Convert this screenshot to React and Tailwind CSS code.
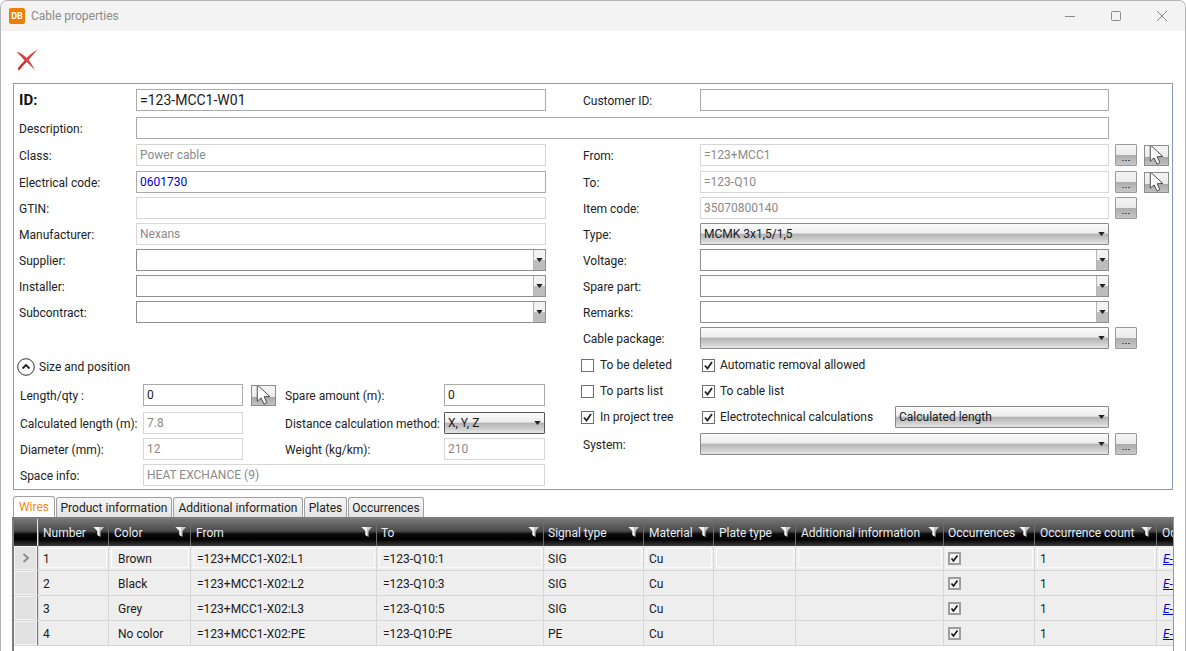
import React from "react";

function Cursor({ className = "" }) {
  return (
    <svg viewBox="0 0 24 24" className={className}>
      <path d="M5.5 1.5 L5.5 18.5 L9.5 15 L12.5 21.5 L15.5 20 L12.7 13.8 L18.5 13.5 Z" fill="#fff" stroke="#444" strokeWidth="1" strokeLinejoin="miter" />
    </svg>
  );
}

function Arrow() {
  return (
    <svg viewBox="0 0 8 5" className="w-[7px] h-[4px] shrink-0">
      <path d="M0 0 H8 L4 5 Z" fill="#222" />
    </svg>
  );
}

function Field({ value = "", kind = "active", w = "w-[409px]", text = "" }) {
  const base = kind === "disabled"
    ? "border-[#d6d6d6] text-[#8a8a8a]"
    : "border-[#ababab] text-[#1a1a1a]";
  return (
    <div className={`h-[22px] ${w} border ${base} ${text} bg-white flex items-center pl-[3px] leading-none whitespace-nowrap overflow-hidden shrink-0`}>
      <span className={kind === "disabled" ? "-mt-[1px]" : ""}>{value}</span>
    </div>
  );
}

function WhiteCombo({ w = "w-[409px]" }) {
  return (
    <div className={`h-[22px] ${w} border border-[#8f8f8f] bg-white flex justify-end shrink-0`}>
      <div className="w-[12px] border-l border-[#b5b5b5] bg-gradient-to-b from-[#f2f2f2] from-50% to-[#bdbdbd] to-50% flex items-center justify-center">
        <Arrow />
      </div>
    </div>
  );
}

function GradCombo({ value = "", w = "w-[409px]", dark = false }) {
  return (
    <div className={`h-[22px] ${w} border ${dark ? "border-[#555]" : "border-[#8a8a8a]"} rounded-[1px] bg-[linear-gradient(to_bottom,#fbfbfb_0%,#ececec_45%,#b4b4b4_52%,#d4d4d4_85%,#e6e6e6_100%)] flex items-center pl-[3px] pr-[3px] justify-between shrink-0 text-[#1a1a1a]`}>
      <span className="whitespace-nowrap">{value}</span>
      <Arrow />
    </div>
  );
}

function Dots() {
  return (
    <div className="w-[22px] h-[22px] ml-[6px] border border-[#9a9a9a] rounded-[1px] bg-[linear-gradient(to_bottom,#f4f4f4_0%,#ebebeb_48%,#adadad_52%,#c8c8c8_100%)] flex items-end justify-center pb-[4px] gap-[1px] shrink-0">
      <span className="w-[2px] h-[1px] bg-[#7a5a50]" />
      <span className="w-[2px] h-[1px] bg-[#3a5a90]" />
      <span className="w-[2px] h-[1px] bg-[#555]" />
    </div>
  );
}

function Pick({ className = "ml-[7px]" }) {
  return (
    <div className={`w-[25px] h-[21px] ${className} border border-[#8c8c8c] bg-[linear-gradient(to_bottom,#f4f4f4_0%,#ececec_55%,#a8a8a8_60%,#c2c2c2_100%)] flex items-center justify-center overflow-hidden shrink-0`}>
      <Cursor className="w-[24px] h-[24px]" />
    </div>
  );
}

function Row({ label, mt = "", children }) {
  return (
    <div className={`flex items-center h-[22px] ${mt}`}>
      <div className="w-[117px] shrink-0 text-[#222] whitespace-nowrap pt-[1px]">{label}</div>
      {children}
    </div>
  );
}

function LowLabel({ w, children, className = "" }) {
  return <div className={`${w} shrink-0 text-[#222] whitespace-nowrap pt-[1px] ${className}`}>{children}</div>;
}

function Check({ on = false }) {
  return (
    <span className="w-[13px] h-[13px] border border-[#6f6f6f] bg-white flex items-center justify-center shrink-0">
      {on && (
        <svg viewBox="0 0 11 11" className="w-[11px] h-[11px]">
          <path d="M2 5.5 L4.5 8.5 L9 2" fill="none" stroke="#222" strokeWidth="1.8" />
        </svg>
      )}
    </span>
  );
}

function CheckLabel({ on, label, w = "", gap = "gap-[5px]" }) {
  return (
    <div className={`flex items-center ${gap} ${w} shrink-0`}>
      <Check on={on} />
      <span className="text-[#222] whitespace-nowrap">{label}</span>
    </div>
  );
}

function Filter() {
  return (
    <svg viewBox="0 0 12 12" className="w-[12px] h-[12px] shrink-0 ml-auto mr-[3px] -mt-[3px]">
      <path d="M0.5 1 H11 L7.5 5 V11 L4.5 9 V5 Z" fill="#c9c9c9" />
      <path d="M4.5 5 L0.5 1 H6 V10 L4.5 9 Z" fill="#f4f4f4" />
    </svg>
  );
}

const cols = [
  ["Number", "w-[70px]", "pl-[4px]", "pl-[4px]"],
  ["Color", "w-[82px]", "pl-[5px]", "pl-[9px]"],
  ["From", "w-[186px]", "pl-[5px]", "pl-[6px]"],
  ["To", "w-[167px]", "pl-[4px]", "pl-[6px]"],
  ["Signal type", "w-[100px]", "pl-[4px]", "pl-[4px]"],
  ["Material", "w-[70px]", "pl-[5px]", "pl-[5px]"],
  ["Plate type", "w-[82px]", "pl-[5px]", "pl-[5px]"],
  ["Additional information", "w-[148px]", "pl-[5px]", "pl-[5px]"],
  ["Occurrences", "w-[91px]", "pl-[4px]", "pl-[4px]"],
  ["Occurrence count", "w-[122px]", "pl-[5px]", "pl-[5px]"],
  ["Oc", "w-[40px]", "pl-[5px]", "pl-[6px]"],
];

const rows = [
  ["1", "Brown", "=123+MCC1-X02:L1", "=123-Q10:1", "SIG", "Cu"],
  ["2", "Black", "=123+MCC1-X02:L2", "=123-Q10:3", "SIG", "Cu"],
  ["3", "Grey", "=123+MCC1-X02:L3", "=123-Q10:5", "SIG", "Cu"],
  ["4", "No color", "=123+MCC1-X02:PE", "=123-Q10:PE", "PE", "Cu"],
];

function Cell({ col, sel, children }) {
  return (
    <div className={`${col[1]} ${col[3]} h-full pt-[2px] shrink-0 border-r border-[#d6d6d6] flex items-center whitespace-nowrap overflow-hidden text-[#1a1a1a] ${sel ? "[outline:1px_solid_#fbfbfb] [outline-offset:-3px]" : ""}`}>
      {children}
    </div>
  );
}

function GridCheck() {
  return (
    <span className="w-[13px] h-[13px] -mt-[2px] border-2 border-[#9d9d9d] bg-[#f4f4f4] flex items-center justify-center">
      <svg viewBox="0 0 9 9" className="w-[9px] h-[9px]">
        <path d="M1.5 4.5 L3.5 7 L7.5 1.5" fill="none" stroke="#111" strokeWidth="1.6" />
      </svg>
    </span>
  );
}

const tabs = [
  ["Wires", "w-[42px]", true],
  ["Product information", "w-[116px]"],
  ["Additional information", "w-[130px]"],
  ["Plates", "w-[43px]"],
  ["Occurrences", "w-[76px]"],
];

export default function App() {
  return (
    <div className="w-[1186px] h-[651px] overflow-hidden bg-white text-[12px] leading-[16px] font-['Roboto',sans-serif] flex flex-col border-x border-t border-[#b4b4b4] rounded-t-[7px]">
      <div className="h-[30px] bg-[#f3f3f3] flex items-center shrink-0">
        <div className="ml-[8px] w-[16px] h-[16px] rounded-[2px] bg-[#ef7d00] text-white text-[9px] font-bold flex items-center justify-center leading-none">DB</div>
        <div className="ml-[6px] text-[#8b8b8b]">Cable properties</div>
        <div className="ml-auto flex items-center">
          <svg viewBox="0 0 46 30" className="w-[46px] h-[30px]"><path d="M18 15.5 H28" stroke="#8a8a8a" strokeWidth="1" /></svg>
          <svg viewBox="0 0 46 30" className="w-[46px] h-[30px]"><rect x="18.5" y="10.5" width="9" height="9" rx="1" fill="none" stroke="#8a8a8a" /></svg>
          <svg viewBox="0 0 46 30" className="w-[46px] h-[30px]"><path d="M18 10 L28 20 M28 10 L18 20" stroke="#8a8a8a" strokeWidth="1" /></svg>
        </div>
      </div>

      <div className="h-[52px] shrink-0 flex items-start pl-[15px] pt-[18px]">
        <svg viewBox="0 0 22 22" className="w-[22px] h-[22px]">
          <path d="M0.5 3 C5 3.500 8 6.500 10.500 9 C14 5.500 17 3 21.500 0.500 C18 4.500 15 8 12.500 11 C15 14 17 17.500 19 21 C16 18.500 13.500 15.500 10.800 13 C8 15.500 6 18.500 3 21.500 C2 21.500 1.500 20 2 19 C3.500 16.500 6 14 8.500 11.500 C6 8.500 3.500 5.500 0.500 3 Z" fill="#d9423f" />
          <path d="M2.500 20.500 C5 17 7.500 14.500 10 12" fill="none" stroke="#b02a28" strokeWidth="1" />
        </svg>
      </div>

      <div className="ml-[12px] w-[1160px] h-[407px] shrink-0 border border-[#7f9db9] pl-[5px] pt-[5px] flex flex-col">
        <div className="flex">
          <div className="w-[527px] flex items-center h-[22px] shrink-0">
            <div className="w-[117px] text-[15px] font-bold text-[#111]">ID:</div>
            <Field value="=123-MCC1-W01" w="w-[410px]" text="text-[14px]" />
          </div>
          <div className="ml-[37px]">
            <Row label="Customer ID:"><Field /></Row>
          </div>
        </div>
        <div className="mt-[6px]">
          <Row label="Description:"><Field w="w-[973px]" /></Row>
        </div>

        <div className="flex mt-[5px]">
          <div className="w-[527px] shrink-0 flex flex-col">
            <Row label="Class:"><Field kind="disabled" value="Power cable" w="w-[410px]" /></Row>
            <Row label="Electrical code:" mt="mt-[5px]"><Field value={<span className="text-[#0000e0]">0601730</span>} w="w-[410px]" /></Row>
            <Row label="GTIN:" mt="mt-[4px]"><Field kind="disabled" w="w-[410px]" /></Row>
            <Row label="Manufacturer:" mt="mt-[4px]"><Field kind="disabled" value="Nexans" w="w-[410px]" /></Row>
            <Row label="Supplier:" mt="mt-[4px]"><WhiteCombo w="w-[410px]" /></Row>
            <Row label="Installer:" mt="mt-[4px]"><WhiteCombo w="w-[410px]" /></Row>
            <Row label="Subcontract:" mt="mt-[4px]"><WhiteCombo w="w-[410px]" /></Row>

            <div className="mt-[34px] h-[20px] flex items-center -ml-[2px]">
              <svg viewBox="0 0 18 18" className="w-[18px] h-[18px] shrink-0">
                <circle cx="9" cy="9" r="8.300" fill="#fff" stroke="#333" strokeWidth="1" />
                <path d="M5.500 10.500 L9 7 L12.500 10.500" fill="none" stroke="#222" strokeWidth="1.800" />
              </svg>
              <span className="ml-[4px] text-[#222]">Size and position</span>
            </div>

            <div className="flex items-center h-[22px] mt-[7px] ml-[1px]">
              <LowLabel w="w-[123px]">Length/qty :</LowLabel>
              <Field value="0" w="w-[100px]" />
              <Pick className="ml-[8px]" />
              <LowLabel w="w-[159px]" className="ml-[9px]">Spare amount (m):</LowLabel>
              <Field value="0" w="w-[101px]" />
            </div>
            <div className="flex items-center h-[22px] mt-[6px] ml-[1px]">
              <LowLabel w="w-[123px]">Calculated length (m):</LowLabel>
              <Field kind="disabled" value="7.8" w="w-[100px]" />
              <LowLabel w="w-[159px]" className="ml-[42px]">Distance calculation method:</LowLabel>
              <GradCombo value="X, Y, Z" w="w-[101px]" dark />
            </div>
            <div className="flex items-center h-[22px] mt-[4px] ml-[1px]">
              <LowLabel w="w-[123px]">Diameter (mm):</LowLabel>
              <Field kind="disabled" value="12" w="w-[100px]" />
              <LowLabel w="w-[159px]" className="ml-[42px]">Weight (kg/km):</LowLabel>
              <Field kind="disabled" value="210" w="w-[101px]" />
            </div>
            <div className="flex items-center h-[22px] mt-[4px] ml-[1px]">
              <LowLabel w="w-[123px]">Space info:</LowLabel>
              <Field kind="disabled" value="HEAT EXCHANCE (9)" w="w-[402px]" />
            </div>
          </div>

          <div className="ml-[37px] flex flex-col">
            <Row label="From:"><Field kind="disabled" value="=123+MCC1" /><Dots /><Pick /></Row>
            <Row label="To:" mt="mt-[5px]"><Field kind="disabled" value="=123-Q10" /><Dots /><Pick /></Row>
            <Row label="Item code:" mt="mt-[4px]"><Field kind="disabled" value="35070800140" /><Dots /></Row>
            <Row label="Type:" mt="mt-[4px]"><GradCombo value="MCMK 3x1,5/1,5" /></Row>
            <Row label="Voltage:" mt="mt-[4px]"><WhiteCombo /></Row>
            <Row label="Spare part:" mt="mt-[4px]"><WhiteCombo /></Row>
            <Row label="Remarks:" mt="mt-[4px]"><WhiteCombo /></Row>
            <Row label="Cable package:" mt="mt-[4px]"><GradCombo /><Dots /></Row>

            <div className="flex items-center h-[22px] mt-[5px] -ml-[2px]">
              <CheckLabel label="To be deleted" w="w-[121px]" gap="gap-[6px]" />
              <CheckLabel on label="Automatic removal allowed" />
            </div>
            <div className="flex items-center h-[22px] mt-[4px] -ml-[2px]">
              <CheckLabel label="To parts list" w="w-[121px]" gap="gap-[6px]" />
              <CheckLabel on label="To cable list" />
            </div>
            <div className="flex items-center h-[22px] mt-[4px] -ml-[2px]">
              <CheckLabel on label="In project tree" w="w-[121px]" gap="gap-[6px]" />
              <CheckLabel on label="Electrotechnical calculations" w="w-[193px]" />
              <GradCombo value="Calculated length" w="w-[214px]" />
            </div>
            <Row label="System:" mt="mt-[5px]"><GradCombo /><Dots /></Row>
          </div>
        </div>
      </div>

      <div className="ml-[12px] mt-[6px] h-[21px] flex items-end gap-[1px] shrink-0">
        {tabs.map(([t, w, active]) => (
          <div
            key={t}
            className={`${w} ${active ? "h-[21px] bg-white text-[#f08a1d]" : "h-[20px] bg-gradient-to-b from-[#f6f6f6] to-[#e4e4e4] text-[#222]"} border border-b-0 border-[#a0a0a0] rounded-t-[3px] flex items-center justify-center whitespace-nowrap shrink-0`}
          >
            {t}
          </div>
        ))}
      </div>

      <div className="ml-[11px] w-[1162px] flex-1 border-l-2 border-t-2 border-r border-t-[#7c7c7c] border-l-[#7c7c7c] border-r-[#7f9db9] overflow-hidden">
        <div className="flex h-[27px] bg-[linear-gradient(to_bottom,#767676_0%,#4a4a4a_45%,#0c0c0c_55%,#000_75%,#3c3c3c_100%)] text-[#e6eef6] w-max">
          <div className="w-[23px] shrink-0" />
          <div className="w-[1px] bg-[#e8e8e8] shrink-0" />
          <div className="w-[1px] bg-[#666] shrink-0" />
          {cols.map((c) => (
            <div key={c[0]} className={`${c[1]} ${c[2]} shrink-0 pt-[1px] border-r border-[#6c6c6c] flex items-center whitespace-nowrap`}>
              <span>{c[0]}</span>
              {c[0] !== "Oc" && <Filter />}
            </div>
          ))}
        </div>
        {rows.map((r, i) => (
          <div key={r[0]} className="flex h-[25px] bg-[#eeeeee] border-b border-[#d6d6d6] w-max">
            <div className="w-[23px] shrink-0 bg-[#e2e2e2] border border-[#f6f6f6] flex items-center justify-center">
              {i === 0 && (
                <svg viewBox="0 0 8 10" className="w-[8px] h-[10px]">
                  <path d="M1.500 1 L6 5 L1.500 9" fill="none" stroke="#8a8a8a" strokeWidth="1.800" />
                </svg>
              )}
            </div>
            <div className="w-[1px] bg-[#777] shrink-0" />
            <div className="w-[1px] bg-[#ddd] shrink-0" />
            {r.map((v, j) => <Cell key={j} col={cols[j]} sel={i === 0}>{v}</Cell>)}
            <Cell col={cols[6]} sel={i === 0} />
            <Cell col={cols[7]} sel={i === 0} />
            <Cell col={cols[8]} sel={i === 0}><GridCheck /></Cell>
            <Cell col={cols[9]} sel={i === 0}>1</Cell>
            <Cell col={cols[10]} sel={i === 0}><span className="text-[#0000e0] underline italic">E-01</span></Cell>
          </div>
        ))}
      </div>
    </div>
  );
}
